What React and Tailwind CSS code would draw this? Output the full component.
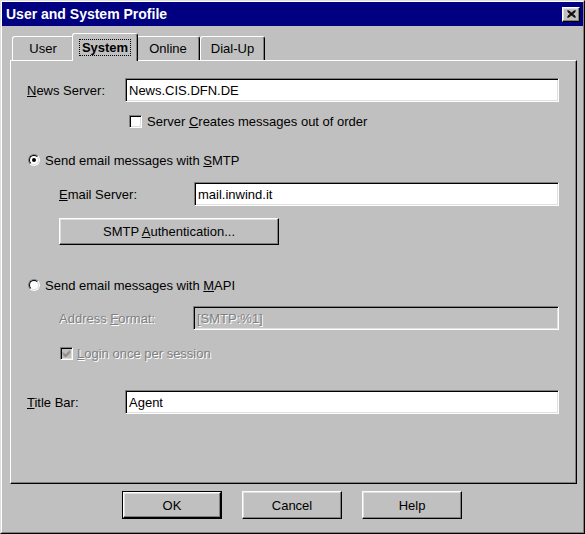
import React from 'react';

const raised =
  'border border-t-white border-l-white border-r-black border-b-black shadow-[inset_-1px_-1px_0_#808080,inset_1px_1px_0_#dfdfdf]';
const sunken =
  'border border-t-[#808080] border-l-[#808080] border-r-white border-b-white shadow-[inset_1px_1px_0_#000,inset_-1px_-1px_0_#dfdfdf]';
const disabledText = 'text-[#808080] [text-shadow:1px_1px_0_#fff]';

function TextBox({ value, disabled, className = '' }) {
  return (
    <div
      className={`${sunken} h-[24px] flex items-center px-[3px] ${
        disabled ? `bg-[#c0c0c0] ${disabledText}` : 'bg-white text-black'
      } ${className}`}
    >
      {value}
    </div>
  );
}

function Radio({ checked }) {
  return (
    <div className="w-[12px] h-[12px] rounded-full border border-t-[#808080] border-l-[#808080] border-r-white border-b-white">
      <div className="w-full h-full rounded-full bg-white border border-t-black border-l-black border-r-[#dfdfdf] border-b-[#dfdfdf] flex items-center justify-center">
        {checked && <div className="w-[4px] h-[4px] rounded-full bg-black" />}
      </div>
    </div>
  );
}

function CheckBox({ checked, disabled }) {
  return (
    <div
      className={`${sunken} w-[13px] h-[13px] flex items-center justify-center ${
        disabled ? 'bg-[#c0c0c0]' : 'bg-white'
      }`}
    >
      {checked && (
        <svg width="9" height="9" viewBox="0 0 9 9">
          <path
            d="M1 3.5 L3.5 6 L8 1.5 M1 4.5 L3.5 7 L8 2.5 M1 5.5 L3.5 8 L8 3.5"
            stroke={disabled ? '#808080' : '#000'}
            strokeWidth="1"
            fill="none"
          />
        </svg>
      )}
    </div>
  );
}

function Tab({ label, selected, width }) {
  if (selected) {
    return (
      <div
        className={`relative z-10 -mb-[1px] h-[28px] ${width} -mx-[2px] bg-[#c0c0c0] border-t border-l border-t-white border-l-white border-r border-r-black rounded-t-[3px] shadow-[inset_-1px_0_0_#808080] flex items-center justify-center`}
      >
        <span className="font-bold px-[2px] border border-dotted border-black leading-[15px]">{label}</span>
      </div>
    );
  }
  return (
    <div
      className={`h-[24px] ${width} bg-[#c0c0c0] border-t border-l border-t-white border-l-white border-r border-r-black rounded-t-[3px] shadow-[inset_-1px_0_0_#808080] flex items-center justify-center`}
    >
      {label}
    </div>
  );
}

function Button({ children, isDefault, className = '' }) {
  const inner = (
    <div className={`${raised} h-full flex items-center justify-center`}>
      <span>{children}</span>
    </div>
  );
  if (isDefault) {
    return <div className={`border border-black ${className}`}>{inner}</div>;
  }
  return <div className={className}>{inner}</div>;
}

export default function App() {
  return (
    <div
      className="w-[585px] h-[534px] bg-[#c0c0c0] text-black text-[13px] leading-none border border-t-[#dfdfdf] border-l-[#dfdfdf] border-r-black border-b-black overflow-hidden"
      style={{ fontFamily: '"Liberation Sans", Arial, sans-serif' }}
    >
      <div className="h-full border border-t-white border-l-white border-r-[#808080] border-b-[#808080] flex flex-col">
        {/* Title bar */}
        <div className="h-[24px] bg-[#000080] flex items-center justify-between pl-[4px] pr-[3px]">
          <span className="text-white font-bold text-[14px]">User and System Profile</span>
          <div className={`${raised} w-[18px] h-[15px] bg-[#c0c0c0] flex items-center justify-center`}>
            <svg width="9" height="8" viewBox="0 0 9 8">
              <path d="M0.5 0.5 L8.5 7.5 M1.5 0.5 L8.5 6.5 M0.5 1.5 L7.5 7.5 M8.5 0.5 L0.5 7.5 M7.5 0.5 L0.5 6.5 M8.5 1.5 L1.5 7.5" stroke="#000" strokeWidth="1" />
            </svg>
          </div>
        </div>

        {/* Tabs */}
        <div className="mt-[8px] ml-[10px] flex items-end h-[26px]">
          <Tab label="User" width="w-[62px]" />
          <Tab label="System" width="w-[66px]" selected />
          <Tab label="Online" width="w-[64px]" />
          <Tab label="Dial-Up" width="w-[65px]" />
        </div>

        {/* Panel */}
        <div className="ml-[8px] w-[567px] h-[424px] border border-t-white border-l-white border-r-black border-b-black shadow-[inset_-1px_-1px_0_#808080] pl-[16px] pr-[17px] flex flex-col">
          <div className="mt-[17px] flex items-center h-[24px]">
            <span className="w-[98px]">
              <u>N</u>ews Server:
            </span>
            <TextBox value="News.CIS.DFN.DE" className="flex-1" />
          </div>

          <div className="mt-[11px] ml-[102px] flex items-center h-[16px] gap-[5px]">
            <CheckBox />
            <span>
              Server <u>C</u>reates messages out of order
            </span>
          </div>

          <div className="mt-[23px] ml-[1px] flex items-center h-[16px] gap-[5px]">
            <Radio checked />
            <span>
              Send email messages with <u>S</u>MTP
            </span>
          </div>

          <div className="mt-[14px] ml-[32px] flex items-center h-[24px]">
            <span className="w-[135px]">
              <u>E</u>mail Server:
            </span>
            <TextBox value="mail.inwind.it" className="flex-1" />
          </div>

          <Button className="mt-[12px] ml-[32px] w-[220px] h-[27px]">
            SMTP <u>A</u>uthentication...
          </Button>

          <div className="mt-[32px] ml-[1px] flex items-center h-[16px] gap-[5px]">
            <Radio />
            <span>
              Send email messages with <u>M</u>API
            </span>
          </div>

          <div className="mt-[13px] ml-[32px] flex items-center h-[24px]">
            <span className={`w-[134px] ${disabledText}`}>
              Address <u>F</u>ormat:
            </span>
            <TextBox value="[SMTP:%1]" disabled className="flex-1" />
          </div>

          <div className="mt-[15px] ml-[33px] flex items-center h-[16px] gap-[4px]">
            <CheckBox checked disabled />
            <span className={disabledText}>
              <u>L</u>ogin once per session
            </span>
          </div>

          <div className="mt-[29px] flex items-center h-[24px]">
            <span className="w-[98px]">
              <u>T</u>itle Bar:
            </span>
            <TextBox value="Agent" className="flex-1" />
          </div>
        </div>

        {/* Buttons */}
        <div className="mt-[7px] ml-[120px] flex gap-[20px]">
          <Button isDefault className="w-[100px] h-[28px]">OK</Button>
          <Button className="w-[100px] h-[28px]">Cancel</Button>
          <Button className="w-[100px] h-[28px]">Help</Button>
        </div>
      </div>
    </div>
  );
}
